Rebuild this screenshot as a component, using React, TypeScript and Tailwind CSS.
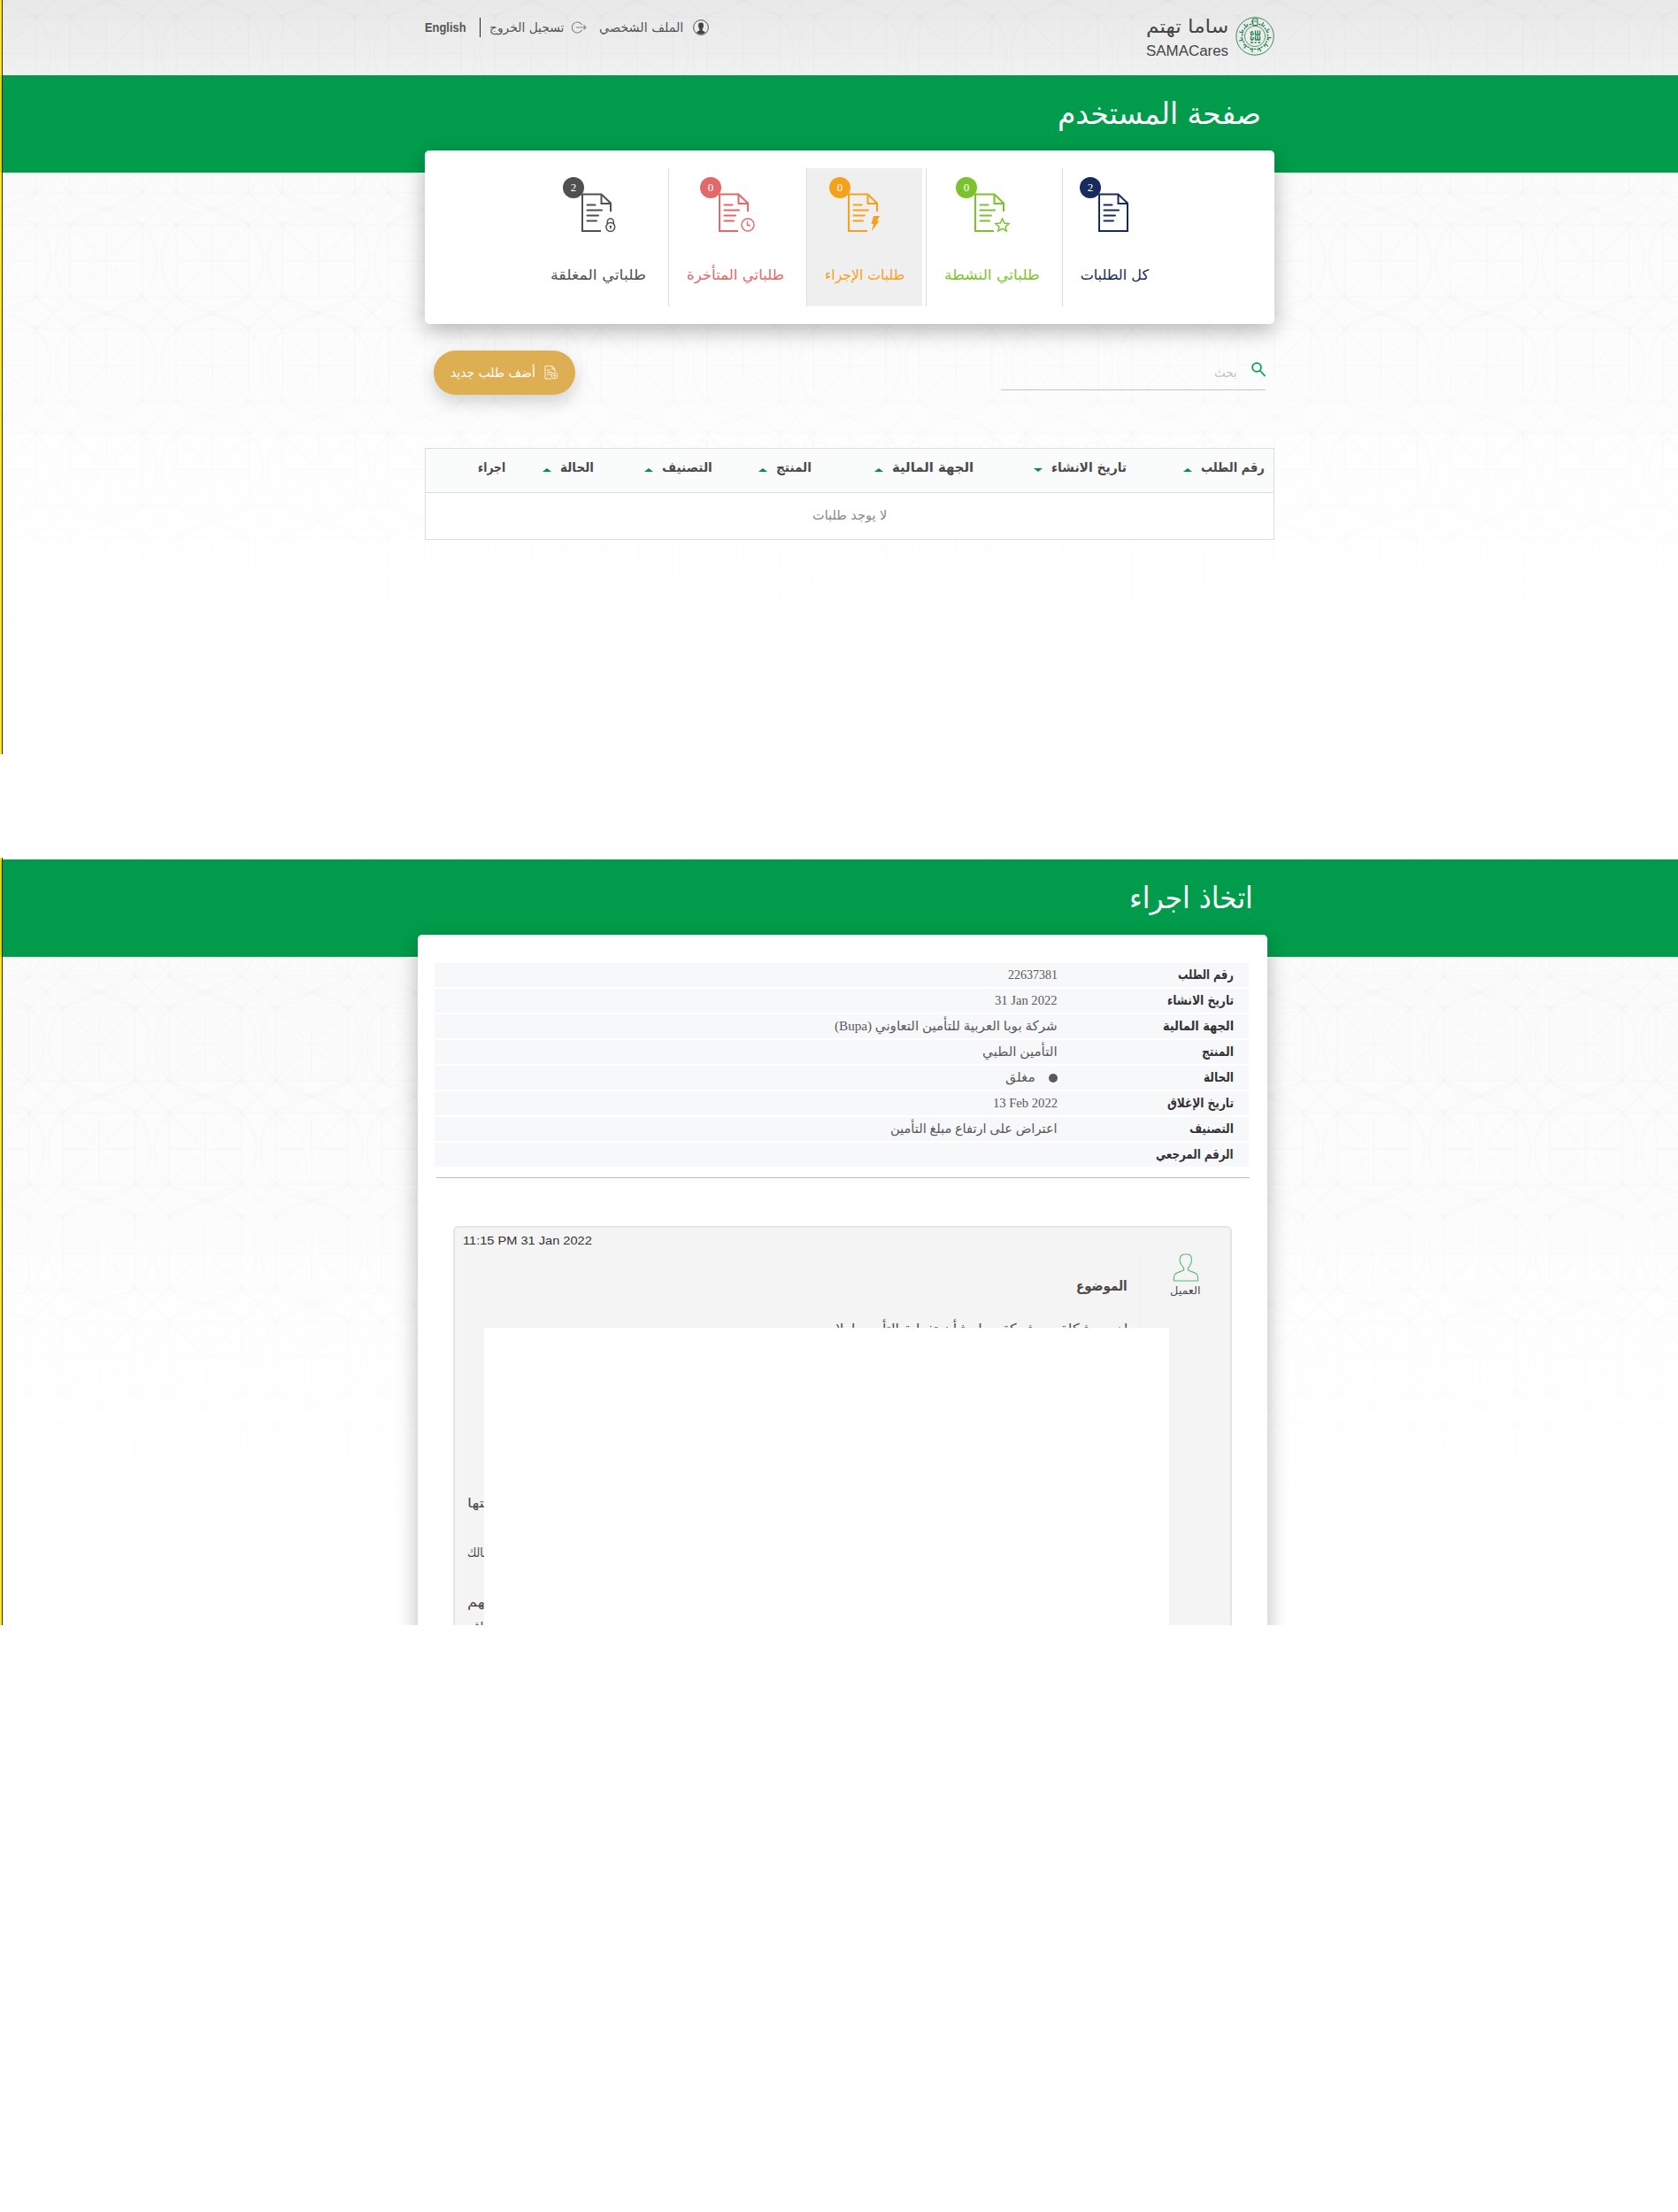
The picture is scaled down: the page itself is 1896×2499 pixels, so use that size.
import React, { useLayoutEffect, useRef, useState } from "react";

/** One line of text condensed or stretched to a fixed measure. */
function Line({ w, className = "", children, ltr = false }: { w: number; className?: string; children: string; ltr?: boolean }) {
  const ref = useRef<HTMLSpanElement>(null);
  const [k, setK] = useState(1);
  useLayoutEffect(() => {
    if (ref.current && ref.current.offsetWidth) setK(w / ref.current.offsetWidth);
  }, [w, children]);
  return (
    <span dir={ltr ? "ltr" : "rtl"} className={`block shrink-0 whitespace-nowrap ${className}`} style={{ width: w }}>
      <span ref={ref} className={`inline-block ${ltr ? "origin-left" : "origin-right"}`} style={{ transform: `scaleX(${k})` }}>
        {children}
      </span>
    </span>
  );
}

function Pattern({ id, shift }: { id: string; shift: string }) {
  return (
    <svg className="absolute inset-0 h-full w-full" aria-hidden="true">
      <defs>
        <pattern id={id} width="120" height="117.6" patternUnits="userSpaceOnUse" patternTransform={shift}>
          <g fill="none" stroke="#000" strokeOpacity="0.013" strokeWidth="1.8">
            <circle cx="60" cy="58.8" r="57.5" />
            <path d="M19 18H101M19 99H101M19 18V99M101 18V99M60 18V99M19 58.8H101" />
            <path d="M0 0L52 51M68 66.600L120 117.600M120 0L68 51M52 66.600L0 117.600" />
            <path d="M60 0Q90 18 120 18M60 0Q30 18 0 18M60 117.600Q90 99 120 99M60 117.600Q30 99 0 99" />
          </g>
        </pattern>
      </defs>
      <rect width="100%" height="100%" fill={`url(#${id})`} />
    </svg>
  );
}

function Emblem() {
  const ticks = Array.from({ length: 34 }, (_, i) => i);
  return (
    <svg viewBox="0 0 44 44" className="mt-px h-11 w-11" fill="none" stroke="#24804f">
      <circle cx="22" cy="22" r="21.2" strokeWidth="0.9" />
      <circle cx="22" cy="22" r="11.6" strokeWidth="0.8" />
      <g strokeWidth="1.2">
        {ticks.map((i) => (
          <path key={i} d={i % 3 === 0 ? "M22 3.500v4h1.600" : i % 3 === 1 ? "M21.500 5.500v2.600" : "M20.800 7.600h2.600"} transform={`rotate(${(i * 360) / 34} 22 22)`} />
        ))}
      </g>
      <g strokeWidth="1.3">
        <path d="M17.500 20.500V17M20 20.500V18M22.500 20.500V15.500M25 20.500V15.500M27.500 20.500V15.500M17 20.500h2.500M22 20.500h6M17.500 17h2.500" />
        <path d="M17.500 26V22M20 26V23M22.500 26V22M25 26V22M27.500 26V22M17 26h3M22 26h6M17 29h3M21.500 29h2M25.500 29h2.500" />
      </g>
      <path d="M19.800 2h5v7.500h-5zM21 5h3" strokeWidth="1" fill="#ededed" />
    </svg>
  );
}

type Extra = "none" | "star" | "bolt" | "clock" | "lock";

function DocIcon({ extra }: { extra: Extra }) {
  return (
    <svg viewBox="0 0 42 46" className="h-[46px] w-[42px]" fill="none" stroke="currentColor" strokeWidth="2">
      {extra === "none" ? <path d="M2 2.500H23.500L34 12.500V44H2Z" /> : <path d="M34 22V12.500L23.500 2.500H2V44H23" />}
      <path d="M23.500 2.500V13H34" />
      <path d="M7.500 14.500H16.500M7.500 20.500H24M7.500 26.500H20M7.500 32.500H18" strokeLinecap="round" />
      {extra === "star" && <path d="M32.500 30L34.700 35L40 35.500L36 39.200L37.200 44L32.500 41.300L27.800 44L29 39.200L25 35.500L30.300 35Z" strokeWidth="1.500" />}
      {extra === "bolt" && <path d="M30 27H37L34 32.500H36.500L28 44L30 36H27.500Z" fill="currentColor" stroke="none" />}
      {extra === "clock" && (
        <g strokeWidth="1.400">
          <circle cx="34" cy="37" r="7" />
          <path d="M33.500 33V37.500H36.800" />
        </g>
      )}
      {extra === "lock" && (
        <g strokeWidth="1.500">
          <circle cx="33.800" cy="39.500" r="4.900" />
          <path d="M30.300 36V33.500a3.500 3.500 0 0 1 7 0V36" />
          <path d="M33.800 38.500v3M32.600 38.800h2.400" />
        </g>
      )}
    </svg>
  );
}

function Tile({ n, label, w, extra, box, icon, badge }: { n: string; label: string; w: number; extra: Extra; box: string; icon: string; badge: string }) {
  return (
    <div className={`flex h-[156px] shrink-0 flex-col ${box}`}>
      <div className={`relative mt-[27px] h-[46px] w-[42px] ${icon}`} dir="ltr">
        <DocIcon extra={extra} />
        <span className={`absolute -top-[17px] -left-[20px] flex h-6 w-6 items-center justify-center rounded-full font-['Liberation_Serif',serif] text-[13px] text-white ${badge}`}>
          {n}
        </span>
      </div>
      <Line w={w} className="mt-[34px] text-[16px] leading-[28px]">{label}</Line>
    </div>
  );
}

function Head({ w, label, gap, cell, down }: { w: number; label: string; gap?: boolean; cell: string; down?: boolean }) {
  return (
    <div className={`flex shrink-0 items-center ${cell}`}>
      <Line w={w} className="text-[15px] leading-6 font-bold">{label}</Line>
      {!gap && (
        <svg viewBox="0 0 10 4" className="mt-1.5 mr-[10px] h-1 w-2.5" fill="#00923f">
          <path d={down ? "M0 0H10L5 4Z" : "M0 4H10L5 0Z"} />
        </svg>
      )}
    </div>
  );
}

function Edge() {
  return <div className="absolute inset-y-0 left-0 w-[3px] border-r border-black/80 bg-[#ffe01b]/85" />;
}

const details: { label: string; lw: number; value: string; vw: number; serif?: boolean; dot?: boolean }[] = [
  { label: "رقم الطلب", lw: 63, value: "22637381", vw: 56, serif: true },
  { label: "تاريخ الانشاء", lw: 75, value: "31 Jan 2022", vw: 71, serif: true },
  { label: "الجهة المالية", lw: 80, value: "شركة بوبا العربية للتأمين التعاوني (Bupa)", vw: 252 },
  { label: "المنتج", lw: 36, value: "التأمين الطبي", vw: 85 },
  { label: "الحالة", lw: 34, value: "مغلق", vw: 34, dot: true },
  { label: "تاريخ الإغلاق", lw: 75, value: "13 Feb 2022", vw: 73, serif: true },
  { label: "التصنيف", lw: 50, value: "اعتراض على ارتفاع مبلغ التأمين", vw: 189 },
  { label: "الرقم المرجعي", lw: 88, value: "", vw: 0 },
];

function UserPage() {
  return (
    <section className="relative h-[852px] overflow-hidden bg-linear-to-b from-[#fafafa] to-white">
      <Pattern id="lattice-top" shift="translate(60 1)" />
      <div className="absolute inset-x-0 bottom-0 h-[450px] bg-linear-to-b from-transparent to-white to-80%" />
      <header className="relative h-[85px] bg-linear-to-b from-black/7 to-black/4">
        <div className="mx-auto flex w-[960px] translate-x-3 items-start justify-between pt-[18px]">
          <div className="flex items-start gap-2">
            <Emblem />
            <div className="text-[#444]">
              <Line w={93} className="text-[21px] leading-6">ساما تهتم</Line>
              <Line w={93} ltr className="mt-[6px] font-['Liberation_Sans'] text-[16px] leading-5">SAMACares</Line>
            </div>
          </div>
          <nav className="mt-px flex h-[24px] items-center text-[14px] text-[#555]">
            <svg viewBox="0 0 18 18" className="h-[18px] w-[18px]">
              <circle cx="9" cy="9" r="8.400" fill="none" stroke="#555" />
              <path d="M6 6.500Q6 3.500 9 3.500T12 6.500Q12 9 10.700 10.500V12.500Q14 13.500 14 15Q9 18.500 4 15Q4 13.500 7.300 12.500V10.500Q6 9 6 6.500Z" fill="#444" />
            </svg>
            <Line w={95} className="mr-[11px]">الملف الشخصي</Line>
            <svg viewBox="0 0 18 14" className="mr-[14px] h-3.5 w-[18px]" fill="none" stroke="#888" strokeWidth="1.200">
              <path d="M12.500 4A6 6 0 1 0 12.500 10M6 7H17M14.500 4.500L17 7L14.500 9.500" />
            </svg>
            <Line w={84} className="mr-[8px]">تسجيل الخروج</Line>
            <span className="mr-[10px] h-[22px] w-px bg-[#222]" />
            <Line w={47} ltr className="mr-[15px] font-['Liberation_Sans'] font-bold">English</Line>
          </nav>
        </div>
      </header>
      <div className="relative h-[110px] bg-[#009c4c]">
        <div className="mx-auto w-[960px] translate-x-3 pt-[19px] pr-[15px]">
          <Line w={230} className="text-[34px] leading-[48px] text-white">صفحة المستخدم</Line>
        </div>
      </div>
      <div className="relative mx-auto -mt-[25px] w-[960px] translate-x-3">
        <div className="flex h-[196px] rounded-[5px] bg-white pt-5 pr-[101px] shadow-[0_8px_24px_rgba(0,0,0,0.28)]">
          <Tile n="2" label="كل الطلبات" w={77} extra="none" box="w-[139px] border-l border-[#d3dfe6] pr-[41px] text-[#172b5c]" icon="mr-[16px]" badge="bg-[#172b5c]" />
          <Tile n="0" label="طلباتي النشطة" w={108} extra="star" box="w-[154px] border-l border-[#d3dfe6] pr-[25px] text-[#7cc22f]" icon="mr-[33px]" badge="bg-[#7cc22f]" />
          <Tile n="0" label="طلبات الإجراء" w={90} extra="bolt" box="mr-[4px] w-[131px] border-l border-[#d3dfe6] bg-[#efefef] pr-[20px] text-[#f5a11c]" icon="mr-[23px]" badge="bg-[#f5a11c]" />
          <Tile n="0" label="طلباتي المتأخرة" w={110} extra="clock" box="w-[156px] border-l border-[#d3dfe6] pr-[25px] text-[#e16969]" icon="mr-[33px]" badge="bg-[#e16969]" />
          <Tile n="2" label="طلباتي المغلقة" w={108} extra="lock" box="w-[150px] pr-[25px] text-[#505050]" icon="mr-[32px]" badge="bg-[#505050]" />
        </div>
        <div className="mt-[30px] flex items-start justify-between px-[10px]">
          <div className="flex h-[45px] w-[299px] items-center border-b border-[#c5c5c5]">
            <svg viewBox="0 0 16 17" className="mb-px h-[17px] w-4" fill="none" stroke="#00a04e" strokeWidth="1.800">
              <circle cx="6" cy="6" r="4.900" />
              <path d="M9.500 9.500L15.500 16" />
            </svg>
            <Line w={26} className="mt-1.5 mr-[16px] text-[15px] text-[#c4c4c4]">بحث</Line>
          </div>
          <div className="flex h-[50px] w-40 items-center justify-center rounded-full bg-[#deae52] text-white shadow-[0_8px_20px_rgba(0,0,0,0.18)]">
            <svg viewBox="0 0 16 16" className="ml-[10px] h-4 w-4" fill="none" stroke="#fff" strokeWidth="0.900">
              <path d="M12 7V4L9 .5H1V15H8M9 .5V4H12M3 5H7M3 7.500H9M3 10H8" />
              <circle cx="11.500" cy="11.500" r="3.300" />
              <path d="M11.500 10V13M10 11.500H13" />
            </svg>
            <Line w={96} className="text-[15px]">أضف طلب جديد</Line>
          </div>
        </div>
        <div className="mt-[60px] border border-[#d8dedf] bg-white text-[#4a4a4a]">
          <div className="flex h-[50px] items-center border-b border-[#d8dedf] bg-[#fafbfb] pr-[10px] pb-[7px]">
            <Head w={72} label="رقم الطلب" cell="w-[156px]" />
            <Head w={85} label="تاريخ الانشاء" cell="w-[173px]" down />
            <Head w={92} label="الجهة المالية" cell="w-[183px]" />
            <Head w={40} label="المنتج" cell="w-[112px]" />
            <Head w={57} label="التصنيف" cell="w-[134px]" />
            <Head w={38} label="الحالة" cell="w-[100px]" />
            <Head w={31} label="اجراء" cell="w-[60px]" gap />
          </div>
          <div className="flex h-[52px] justify-center pt-[13px] text-[#888]">
            <Line w={84} className="text-[15px] leading-6">لا يوجد طلبات</Line>
          </div>
        </div>
      </div>
      <Edge />
    </section>
  );
}

function ActionPage() {
  return (
    <section className="relative h-[867px] overflow-hidden bg-linear-to-b from-[#fafafa] to-white pt-[2px]">
      <Pattern id="lattice-bottom" shift="translate(52 34.6)" />
      <div className="absolute inset-x-0 bottom-0 h-[520px] bg-linear-to-b from-transparent to-white to-80%" />
      <div className="relative h-[110px] bg-[#009c4c]">
        <div className="mx-auto w-[960px] translate-x-1 pt-[19px] pr-[16px]">
          <Line w={140} className="text-[34px] leading-[48px] text-white">اتخاذ اجراء</Line>
        </div>
      </div>
      <div className="relative mx-auto -mt-[25px] h-[820px] w-[960px] translate-x-1 rounded-[5px] bg-white px-[19px] pt-[32px] shadow-[0_8px_24px_rgba(0,0,0,0.28)]">
        <div className="mr-[2px] flex flex-col gap-[2px]">
          {details.map((d) => (
            <div key={d.label} className="flex h-[27px] items-center bg-[#f7f8fa] pr-[17px] text-[15px] text-[#5a5a5a]">
              <div className="w-[199px] text-[#333]">
                <Line w={d.lw} className="font-bold">{d.label}</Line>
              </div>
              {d.dot && <span className="ml-[15px] h-[10px] w-[10px] rounded-full bg-[#5a5a5a]" />}
              {d.value && <Line w={d.vw} ltr={d.serif} className={d.serif ? "font-['Liberation_Serif']" : "font-['Liberation_Serif','DejaVu_Sans']"}>{d.value}</Line>}
            </div>
          ))}
        </div>
        <div className="mr-[1px] ml-[2px] mt-[12px] h-px bg-[#b9c0c7]" />
        <article className="relative mx-[21px] mt-[54px] h-[480px] rounded-[6px] border-2 border-[#e4e5e5] bg-[#f4f4f4] text-[#4a4a4a]">
          <div className="flex h-[30px] items-center justify-end pl-[9px]">
            <Line w={146} ltr className="font-['Liberation_Sans'] text-[13px] text-[#333]">11:15 PM 31 Jan 2022</Line>
          </div>
          <div className="flex">
            <div className="flex w-[102px] flex-col items-center border-l border-[#efefef]">
              <svg viewBox="0 0 30 33" className="-mt-px h-[32px] w-[30px]" fill="none" stroke="#5cb874" strokeWidth="1.200">
                <path d="M8 6Q8 1 15 1T21.500 6.500V9.500Q20 15 17.500 17V19.500C22 22 29 22 29 28V32H1V28C1 22 8 22 12.500 19.500V17Q9 14 8 9.500Z" />
              </svg>
              <Line w={34} className="text-[12px] leading-5">العميل</Line>
            </div>
            <div className="flex grow flex-col pt-[22px] pr-[14px]">
              <Line w={58} className="text-[16px] leading-7 font-bold">الموضوع</Line>
              <Line w={340} className="mt-[20px] text-[15px] leading-7">لدي مشكلة مع شركة بوبا بشأن تغطية التأمين لعلاج</Line>
            </div>
          </div>
          <div className="absolute top-[300px] left-[14px] flex flex-col text-[15px]" dir="ltr">
            <Line w={25} className="h-14">لتها</Line>
            <Line w={25} className="h-14">مالك</Line>
            <Line w={25} className="h-7">لهم</Line>
            <Line w={25}>راف</Line>
          </div>
          <div className="absolute top-[113px] right-[69px] bottom-0 left-[33px] bg-white" />
        </article>
      </div>
      <Edge />
    </section>
  );
}

export default function App() {
  return (
    <main dir="rtl" className="h-[2499px] w-full overflow-hidden bg-white font-['DejaVu_Sans',sans-serif]">
      <UserPage />
      <div className="h-[117px]" />
      <ActionPage />
    </main>
  );
}
